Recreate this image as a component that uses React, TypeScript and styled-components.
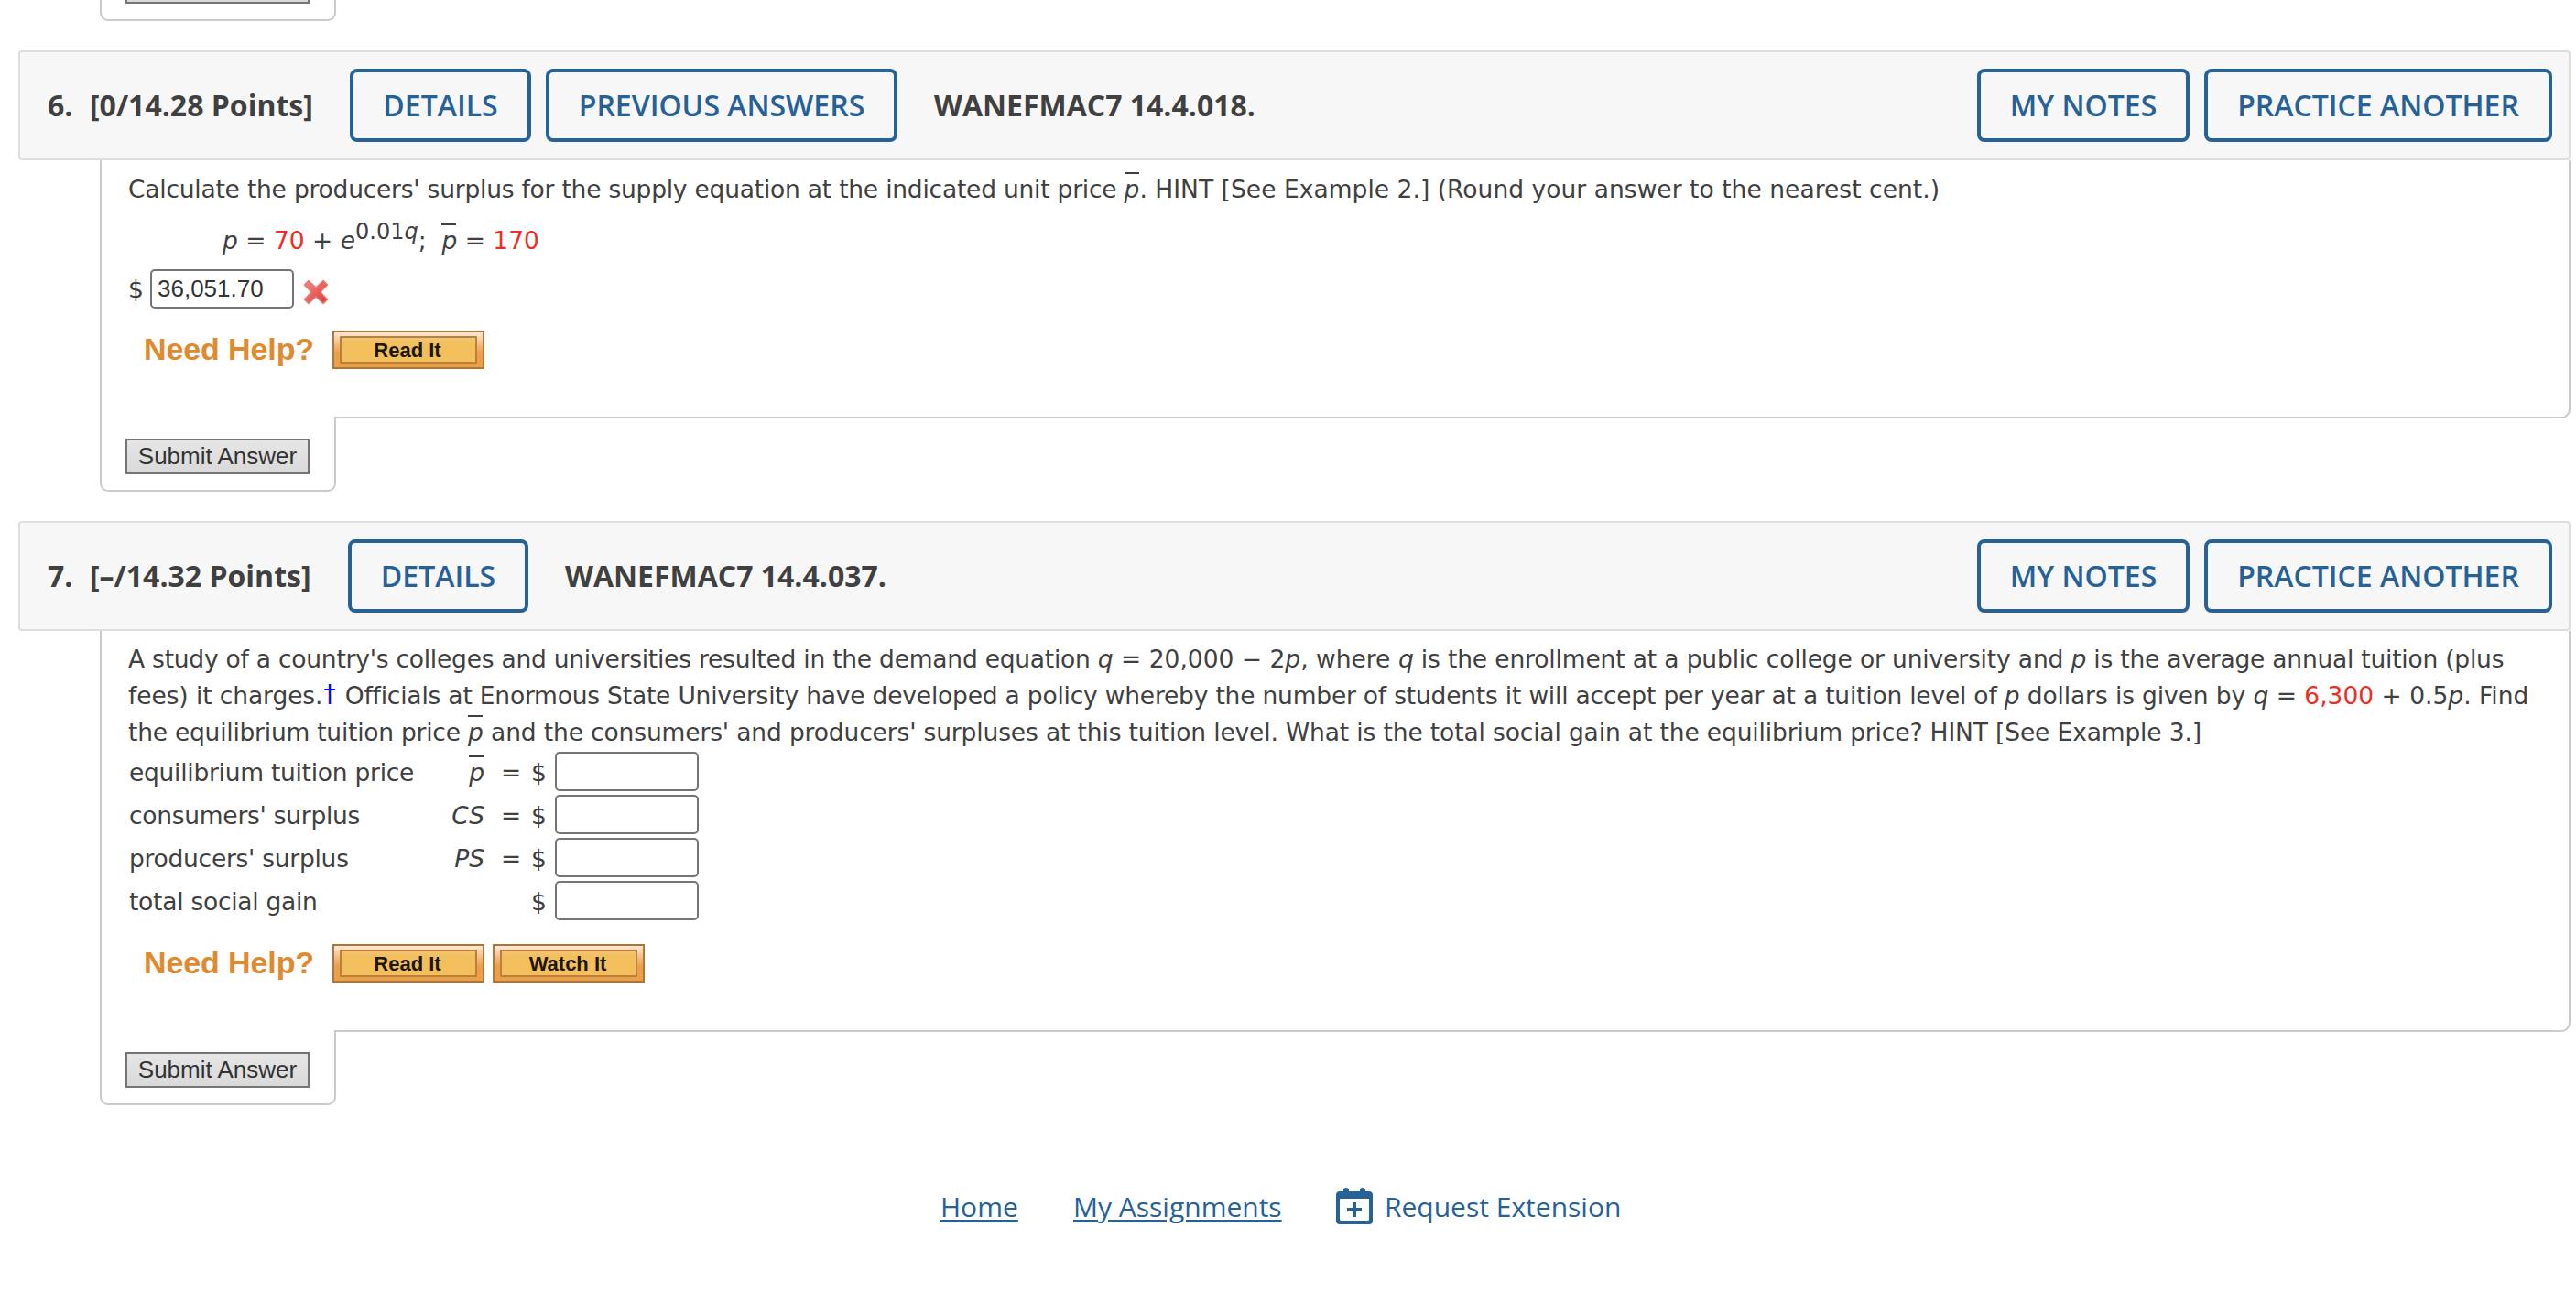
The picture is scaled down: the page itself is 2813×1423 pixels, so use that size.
import React from "react";
import styled, { createGlobalStyle } from "styled-components";

const Global = createGlobalStyle`
  * { box-sizing: border-box; }
  body { margin: 0; background: #fff; }
`;

const Page = styled.main`
  width: 2813px;
  height: 1423px;
  overflow: hidden;
  padding: 0 6px 0 20px;
  color: #404040;
  font-family: "DejaVu Sans", Verdana, sans-serif;
  font-size: 26.5px;
`;

const Question = styled.section`
  margin-bottom: 32px;
`;

const Header = styled.header`
  display: flex;
  align-items: center;
  height: 120px;
  padding: 0 18px 0 30px;
  border: 2px solid #dedede;
  border-radius: 4px;
  background: #f7f7f7;
  font-family: "Open Sans", sans-serif;
  font-size: 32px;
  font-weight: 700;
  white-space: nowrap;
`;

const Number = styled.span`
  width: 46px;
  padding-bottom: 2px;
`;

const Points = styled.span<{ $w: number }>`
  width: ${(p) => p.$w}px;
  padding-bottom: 2px;
`;

const Code = styled.span`
  margin-left: 24px;
  padding-bottom: 2px;
  flex: 1;
`;

const HeaderButton = styled.button<{ $w: number }>`
  width: ${(p) => p.$w}px;
  height: 80px;
  margin-right: 16px;
  padding: 0 0 2px;
  border: 4px solid #266197;
  border-radius: 8px;
  background: transparent;
  color: #266197;
  font: 600 32px "Open Sans", sans-serif;
  &:last-child { margin-right: 0; }
`;

const Body = styled.div<{ $top: number }>`
  margin-left: 89px;
  padding: ${(p) => p.$top}px 28px 52px 29px;
  border: solid #cbcbcb;
  border-width: 0 2px 2px;
  border-radius: 0 0 10px 0;
`;

const SubmitTab = styled.div`
  position: relative;
  width: 258px;
  height: 82px;
  margin: -2px 0 0 89px;
  padding: 24px 0 0 26px;
  border: solid #cbcbcb;
  border-width: 0 2px 2px;
  border-radius: 0 0 9px 9px;
  background: #fff;
`;

const Submit = styled.button`
  display: block;
  width: 201px;
  height: 39px;
  padding: 0;
  border: 2px solid #757575;
  border-radius: 0;
  background: linear-gradient(#e6e6e6, #d9d9d9);
  color: #333;
  font: 26px "Liberation Sans", Arial, sans-serif;
  line-height: 33px;
  padding-bottom: 1px;
  white-space: nowrap;
`;

const Line = styled.div`
  height: 40px;
  line-height: 40px;
  white-space: nowrap;
`;

const Text = styled.span<{ $track: number }>`
  letter-spacing: ${(p) => p.$track}px;
`;

const Equation = styled(Line)`
  margin: 16px 0 11px;
  padding-left: 103px;
`;

const Sup = styled.sup`
  position: relative;
  top: -11px;
  font-size: 24px;
  vertical-align: baseline;
  line-height: 0;
`;

const Red = styled.span`
  color: #ee2e24;
`;

const Bar = styled.i`
  display: inline-block;
  line-height: 37px;
  letter-spacing: 0;
  background: linear-gradient(#404040, #404040) 0 0 / 16px 2px no-repeat;
`;

const Dagger = styled.sup`
  position: relative;
  top: -2px;
  margin: 0 2px 0 1px;
  color: #00f;
  vertical-align: baseline;
  line-height: 0;
  font-size: 26px;
`;

const AnswerRow = styled.div`
  display: flex;
  align-items: center;
  height: 43px;
`;

const Dollar = styled.span`
  width: 24px;
`;

const Field = styled.input`
  width: 157px;
  height: 43px;
  padding: 0 6px 1px;
  border: 2px solid #757575;
  border-radius: 5px;
  outline: 0;
  background: #fff;
  color: #333;
  font: 26px "Liberation Sans", Arial, sans-serif;
`;

const CrossIcon = styled.svg`
  margin: 6px 0 0 10px;
`;

const Solutions = styled.div`
  display: grid;
  grid-template-columns: 328px 60px 18px 33px 26px 157px;
  row-gap: 4px;
  margin: 1px 0 26px 1px;
  line-height: 45px;
  grid-auto-rows: 43px;
  white-space: nowrap;
`;

const Symbol = styled.i`
  text-align: right;
`;

const Help = styled.div<{ $top?: number }>`
  display: flex;
  align-items: center;
  height: 42px;
  margin-top: ${(p) => p.$top ?? 0}px;
  gap: 9px;
`;

const HelpLabel = styled.span`
  width: 214px;
  padding-left: 17px;
  color: #e08a2f;
  font: 700 34px/40px "Liberation Sans", Arial, sans-serif;
  padding-bottom: 2px;
  letter-spacing: -0.1px;
  white-space: nowrap;
`;

const HelpButton = styled.button`
  width: 166px;
  height: 42px;
  padding: 4px 6px;
  border: 2px solid #ad7836;
  background: linear-gradient(#fdeada, #f3b273 40%, #ec9f49 60%);
  font: 700 22px "Liberation Sans", Arial, sans-serif;
  color: #1d1605;
`;

const HelpFace = styled.span`
  display: block;
  height: 30px;
  border: 2px solid #b9813f;
  border-radius: 1px;
  background: linear-gradient(#f3c67a, #f2bf5c 5px);
  line-height: 28px;
  padding-right: 2px;
`;

const Footer = styled.footer`
  display: flex;
  align-items: center;
  height: 46px;
  margin-top: 87px;
  padding-left: 1007px;
  color: #266197;
  font: 30px "Open Sans", sans-serif;
  white-space: nowrap;
`;

const Link = styled.a<{ $w: number }>`
  width: ${(p) => p.$w}px;
  text-decoration: underline;
  text-decoration-thickness: 3px;
  text-underline-offset: 3px;
`;

const Request = styled.span`
  display: flex;
  align-items: center;
  gap: 13px;
`;

const PBar = () => <Bar>p</Bar>;

const Cross = () => (
  <CrossIcon width="28" height="28" viewBox="0 0 28 28">
    <defs>
      <linearGradient id="cross" x1="0" y1="0" x2="1" y2="1">
        <stop offset="0" stopColor="#f28a86" />
        <stop offset="1" stopColor="#dd3a38" />
      </linearGradient>
    </defs>
    <path
      d="M6 1.500 14 9 22 1.500 26.500 6 19 14 26.500 22 22 26.500 14 19 6 26.500 1.500 22 9 14 1.500 6Z"
      fill="url(#cross)"
      stroke="#ea7672"
      strokeWidth="1.500"
      strokeLinejoin="round"
    />
  </CrossIcon>
);

const CalendarPlus = () => (
  <svg width="40" height="40" viewBox="0 0 40 40">
    <path
      fillRule="evenodd"
      fill="#266197"
      d="M8 4V3a3 3 0 0 1 6 0V4H26V3a3 3 0 0 1 6 0V4H36a4 4 0 0 1 4 4V36a4 4 0 0 1-4 4H4a4 4 0 0 1-4-4V8A4 4 0 0 1 4 4ZM4 12V34.500a1.500 1.500 0 0 0 1.500 1.500H34.500a1.500 1.500 0 0 0 1.500-1.500V12Z"
    />
    <path d="M20 16V32M12 24H28" stroke="#266197" strokeWidth="4" />
  </svg>
);

const TabEdge = styled.i`
  position: absolute;
  top: 0;
  right: -2px;
  width: 2px;
  height: 2px;
  background: #cbcbcb;
`;

const SubmitArea = ({ label = "Submit Answer" }: { label?: string }) => (
  <SubmitTab>
    <TabEdge />
    <Submit>{label}</Submit>
  </SubmitTab>
);

const HelpAction = ({ label }: { label: string }) => (
  <HelpButton>
    <HelpFace>{label}</HelpFace>
  </HelpButton>
);

const PreviousQuestion = styled.div`
  height: 55px;
  overflow: hidden;
`;

const PreviousInner = styled.div`
  margin-top: -59px;
`;

type SolutionProps = { label: string; symbol?: React.ReactNode };

const Solution = ({ label, symbol }: SolutionProps) => (
  <>
    <Text $track={-0.27}>{label}</Text>
    <Symbol>{symbol}</Symbol>
    <span />
    <span>{symbol ? "=" : ""}</span>
    <span>$</span>
    <Field />
  </>
);

export default function App() {
  return (
    <>
      <Global />
      <Page>
        <PreviousQuestion>
          <PreviousInner>
            <SubmitArea label="" />
          </PreviousInner>
        </PreviousQuestion>

        <Question>
          <Header>
            <Number>6.</Number>
            <Points $w={284}>[0/14.28 Points]</Points>
            <HeaderButton $w={198}>DETAILS</HeaderButton>
            <HeaderButton $w={384}>PREVIOUS ANSWERS</HeaderButton>
            <Code>WANEFMAC7 14.4.018.</Code>
            <HeaderButton $w={232}>MY NOTES</HeaderButton>
            <HeaderButton $w={380}>PRACTICE ANOTHER</HeaderButton>
          </Header>
          <Body $top={12}>
            <Line>
              <Text $track={-0.23}>
                Calculate the producers' surplus for the supply equation at the indicated unit price{" "}
              </Text>
              <PBar />
              <Text $track={0.03}>. HINT [See Example 2.] (Round your answer to the nearest cent.)</Text>
            </Line>
            <Equation>
              <i>p</i> = <Red>70</Red> + <i>e</i>
              <Sup>
                0.01<i>q</i>
              </Sup>
              ;&nbsp; <PBar /> = <Red>170</Red>
            </Equation>
            <AnswerRow>
              <Dollar>$</Dollar>
              <Field defaultValue="36,051.70" />
              <Cross />
            </AnswerRow>
            <Help $top={24}>
              <HelpLabel>Need Help?</HelpLabel>
              <HelpAction label="Read It" />
            </Help>
          </Body>
          <SubmitArea />
        </Question>

        <Question>
          <Header>
            <Number>7.</Number>
            <Points $w={282}>[–/14.32 Points]</Points>
            <HeaderButton $w={197}>DETAILS</HeaderButton>
            <Code>WANEFMAC7 14.4.037.</Code>
            <HeaderButton $w={232}>MY NOTES</HeaderButton>
            <HeaderButton $w={380}>PRACTICE ANOTHER</HeaderButton>
          </Header>
          <Body $top={11}>
            <Line>
              <Text $track={-0.24}>
                A study of a country's colleges and universities resulted in the demand equation{" "}
              </Text>
              <i>q</i> = 20,000 − 2<i>p</i>, where{" "}
              <Text $track={-0.15}>
                <i>q</i> is the enrollment at a public college or university and{" "}
              </Text>
              <Text $track={-0.23}>
                <i>p</i> is the average annual tuition (plus
              </Text>
            </Line>
            <Line>
              <Text $track={-0.1}>fees) it charges.</Text>
              <Dagger>†</Dagger>{" "}
              <Text $track={-0.21}>
                Officials at Enormous State University have developed a policy whereby the number of students it will
                accept per year at a tuition level of{" "}
              </Text>
              <Text $track={-0.12}>
                <i>p</i> dollars is given by{" "}
              </Text>
              <i>q</i> = <Red>6,300</Red> + 0.5<i>p</i>. Find
            </Line>
            <Line>
              <Text $track={-0.24}>the equilibrium tuition price </Text>
              <PBar />
              <Text $track={-0.145}>
                {" "}
                and the consumers' and producers' surpluses at this tuition level. What is the total social gain at the
                equilibrium price? HINT [See Example 3.]
              </Text>
            </Line>
            <Solutions>
              <Solution label="equilibrium tuition price" symbol={<PBar />} />
              <Solution label="consumers' surplus" symbol="CS" />
              <Solution label="producers' surplus" symbol="PS" />
              <Solution label="total social gain" />
            </Solutions>
            <Help>
              <HelpLabel>Need Help?</HelpLabel>
              <HelpAction label="Read It" />
              <HelpAction label="Watch It" />
            </Help>
          </Body>
          <SubmitArea />
        </Question>

        <Footer>
          <Link $w={145}>Home</Link>
          <Link $w={287}>My Assignments</Link>
          <Request>
            <CalendarPlus />
            Request Extension
          </Request>
        </Footer>
      </Page>
    </>
  );
}
